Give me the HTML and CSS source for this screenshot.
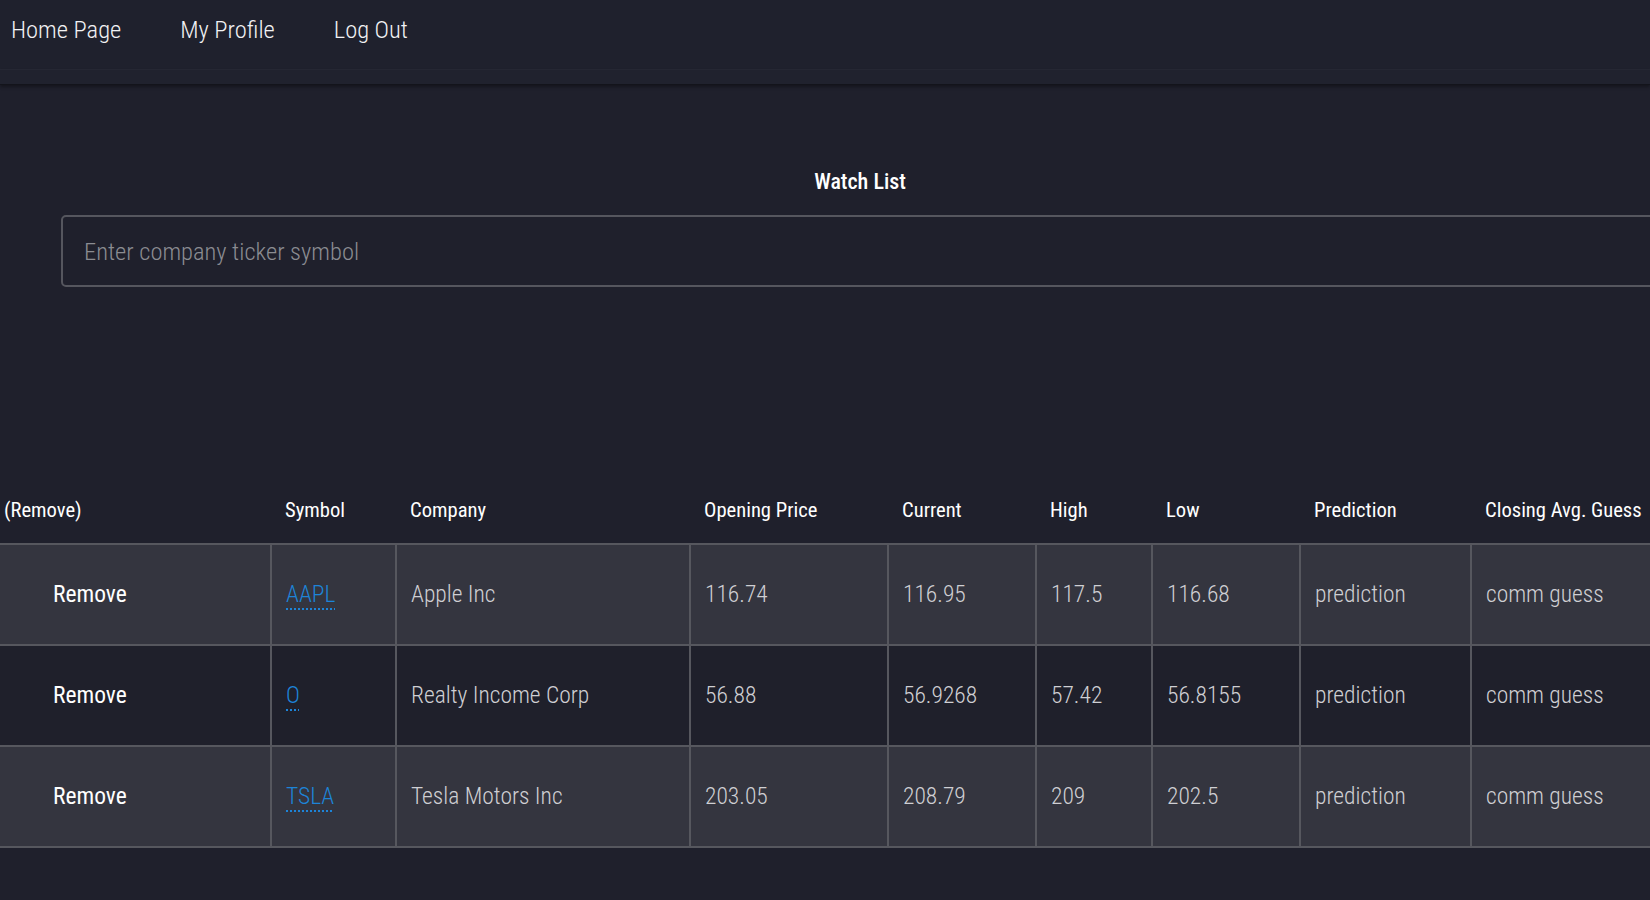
FILE: index.html
```html
<!DOCTYPE html>
<html lang="en">
<head>
<meta charset="utf-8">
<title>Watch List</title>
<link rel="stylesheet" href="styles.css">
</head>
<body>
<nav class="navbar">
  <a class="nav-link" href="#">Home Page</a>
  <a class="nav-link" href="#">My Profile</a>
  <a class="nav-link" href="#">Log Out</a>
</nav>
<div class="nav-strip"></div>
<main class="page">
  <section class="search">
    <h1 class="title">Watch List</h1>
    <input class="ticker-input" type="text" placeholder="Enter company ticker symbol">
  </section>
  <table class="watch-table">
    <colgroup>
      <col class="c-remove"><col class="c-symbol"><col class="c-company"><col class="c-open"><col class="c-current"><col class="c-high"><col class="c-low"><col class="c-pred"><col class="c-guess">
    </colgroup>
    <thead>
      <tr>
        <th class="th-first">(Remove)</th>
        <th>Symbol</th>
        <th>Company</th>
        <th>Opening Price</th>
        <th>Current</th>
        <th>High</th>
        <th>Low</th>
        <th>Prediction</th>
        <th>Closing Avg. Guess</th>
      </tr>
    </thead>
    <tbody>
      <tr class="row-light">
        <td class="td-remove"><span class="remove-btn">Remove</span></td>
        <td><a class="sym" href="#">AAPL</a></td>
        <td>Apple Inc</td>
        <td>116.74</td>
        <td>116.95</td>
        <td>117.5</td>
        <td>116.68</td>
        <td>prediction</td>
        <td>comm guess</td>
      </tr>
      <tr class="row-dark">
        <td class="td-remove"><span class="remove-btn">Remove</span></td>
        <td><a class="sym" href="#">O</a></td>
        <td>Realty Income Corp</td>
        <td>56.88</td>
        <td>56.9268</td>
        <td>57.42</td>
        <td>56.8155</td>
        <td>prediction</td>
        <td>comm guess</td>
      </tr>
      <tr class="row-light">
        <td class="td-remove"><span class="remove-btn">Remove</span></td>
        <td><a class="sym" href="#">TSLA</a></td>
        <td>Tesla Motors Inc</td>
        <td>203.05</td>
        <td>208.79</td>
        <td>209</td>
        <td>202.5</td>
        <td>prediction</td>
        <td>comm guess</td>
      </tr>
    </tbody>
  </table>
</main>
</body>
</html>
```
FILE: styles.css
```css
html, body {
  margin: 0;
  padding: 0;
}
body {
  background: #1f202c;
  color: #c9c9cd;
  font-family: "Roboto Condensed", Roboto, "Liberation Sans", sans-serif;
  overflow: hidden;
  width: 1650px;
  height: 900px;
}

.navbar {
  height: 70px;
  box-sizing: border-box;
  padding: 16px 0 0 11px;
  display: flex;
  gap: 59px;
  background: #1f212d;
  border-bottom: 1px solid #262834;
}
.nav-link {
  color: #f2f2f4;
  text-decoration: none;
  font-size: 24.5px;
  font-weight: 300;
  line-height: 28px;
}
.nav-strip {
  height: 14px;
  background: #20222e;
  border-bottom: 1px solid #13141b;
  box-shadow: 0 2px 3px rgba(0, 0, 0, 0.35);
}

.page {
  width: 1720px;
}
.search {
  padding: 0 61px;
  display: flex;
  flex-direction: column;
  align-items: center;
}
.title {
  margin: 84px 0 0;
  font-size: 22px;
  line-height: 26px;
  font-weight: 500;
  color: #ffffff;
}
.ticker-input {
  margin-top: 20px;
  width: 100%;
  height: 72px;
  box-sizing: border-box;
  background: transparent;
  border: 2px solid #55565e;
  border-radius: 5px;
  padding: 0 21px;
  font-family: inherit;
  font-size: 24.5px;
  font-weight: 300;
  color: #dcdcdc;
  outline: none;
}
.ticker-input::placeholder {
  color: #8b8c92;
}

.watch-table {
  margin-top: 199px;
  width: 1720px;
  border-collapse: collapse;
  table-layout: fixed;
}
.c-remove { width: 271px; }
.c-symbol { width: 125px; }
.c-company { width: 294px; }
.c-open { width: 198px; }
.c-current { width: 148px; }
.c-high { width: 116px; }
.c-low { width: 148px; }
.c-pred { width: 171px; }
.c-guess { width: 249px; }

.watch-table th {
  text-align: left;
  font-size: 20.6px;
  line-height: 23px;
  font-weight: 400;
  color: #ffffff;
  padding: 13px 14px 21px;
  white-space: nowrap;
}
.watch-table th.th-first {
  padding-left: 4px;
}
.watch-table td {
  height: 99px;
  padding: 0 14px;
  border: 2px solid #56575e;
  font-size: 23.5px;
  line-height: 27px;
  font-weight: 300;
  color: #cfcfd3;
  white-space: nowrap;
}
.watch-table td.td-remove {
  border-left: none;
  padding-left: 53px;
}
.row-light td { background: #34353f; }
.row-dark td { background: #1f202b; }

.remove-btn {
  color: #ffffff;
  font-weight: 400;
}
.sym {
  color: #1d84d8;
  text-decoration: underline dotted #1d84d8;
  text-decoration-thickness: 2px;
  text-underline-offset: 6px;
}
```
